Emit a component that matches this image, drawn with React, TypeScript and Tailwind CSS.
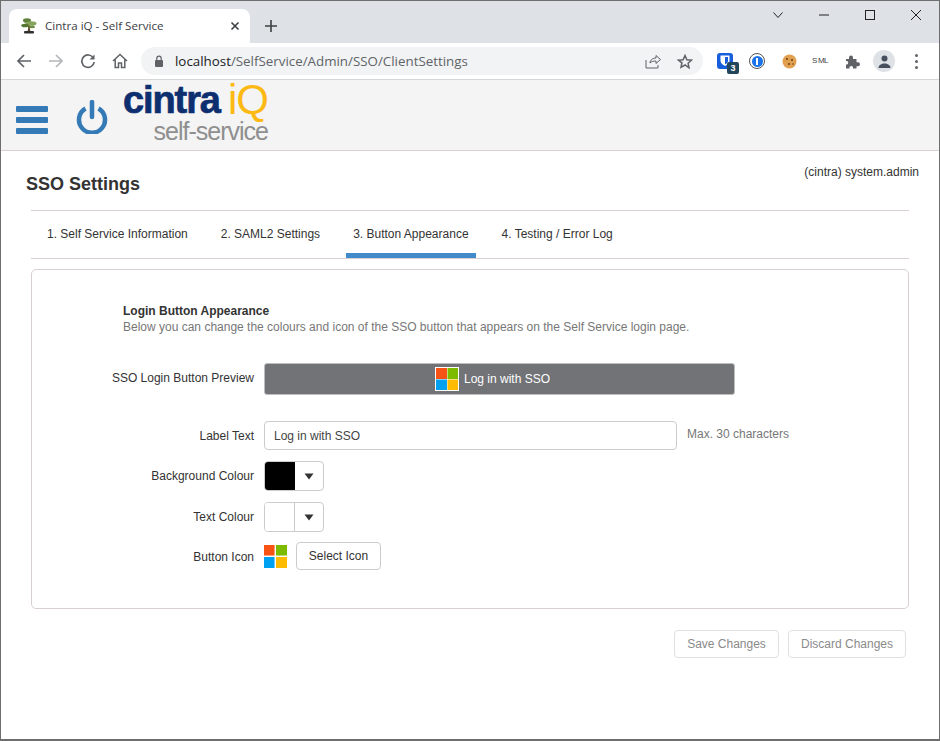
import React from "react";

function MsIcon({ size, border }: { size: number; border?: boolean }) {
  return (
    <svg width={size} height={size} viewBox="0 0 24 24" className="shrink-0">
      {border && <rect width="24" height="24" fill="#fff" />}
      <rect x={border ? 1 : 0} y={border ? 1 : 0} width="11" height="11" fill="#f65314" />
      <rect x="12.5" y={border ? 1 : 0} width={border ? 10.5 : 11.5} height="11" fill="#7cbb00" />
      <rect x={border ? 1 : 0} y="12.5" width="11" height={border ? 10.5 : 11.5} fill="#00a1f1" />
      <rect x="12.5" y="12.5" width={border ? 10.5 : 11.5} height={border ? 10.5 : 11.5} fill="#ffbb00" />
    </svg>
  );
}

function Swatch({ black }: { black?: boolean }) {
  return (
    <div className="flex h-[30px] w-[60px] overflow-hidden rounded-[4px] border border-[#cccccc] bg-white">
      <div className={black ? "w-[30px] bg-black" : "w-[30px] border-r border-[#cccccc] bg-white"} />
      <div className="flex flex-1 items-center justify-center">
        <svg width="10" height="7" viewBox="0 0 10 7"><path d="M0.5 0.5h9L5 6.5z" fill="#333" /></svg>
      </div>
    </div>
  );
}

function Row({ label, className, labelClass, children }: { label: string; className: string; labelClass?: string; children: React.ReactNode }) {
  return (
    <div className={`flex items-center ${className}`}>
      <div className={`w-[222px] shrink-0 text-right text-[12px] text-[#333] ${labelClass ?? ""}`}>{label}</div>
      <div className="ml-[10px] flex min-w-0 flex-1 items-center">{children}</div>
    </div>
  );
}

function Tab({ label, active }: { label: string; active?: boolean }) {
  return (
    <div className={`flex h-[47px] items-center border-b-[5px] px-[7px] pt-[4px] text-[12px] text-[#333] ${active ? "border-[#428bca]" : "border-transparent"}`}>
      {label}
    </div>
  );
}

export default function App() {
  return (
    <div className="flex h-[741px] w-[940px] flex-col overflow-hidden border border-b-2 border-[#6e6e6e] bg-white font-['Liberation_Sans',Arial,sans-serif]">
      {/* Tab strip */}
      <div className="relative flex h-[42px] shrink-0 items-end bg-[#dee1e6] pl-[8px]">
        <div className="flex h-[34px] w-[241px] items-center rounded-t-[8px] bg-white pl-[12px] pr-[10px] font-['Open_Sans',sans-serif] text-[11.6px] text-[#3c4043]">
          <svg width="16" height="18" viewBox="0 0 16 18" className="mr-[8px] shrink-0">
            <path d="M7 8c0 2 .5 4-.5 6h3C8.500 12 9 10 9 8z" fill="#5a4a2a" />
            <ellipse cx="6" cy="3.500" rx="4" ry="2.300" fill="#5f7f3a" />
            <ellipse cx="10" cy="6.500" rx="5.500" ry="2.300" fill="#86a35c" />
            <ellipse cx="4" cy="8.500" rx="3.800" ry="1.800" fill="#53752f" />
            <ellipse cx="11" cy="10" rx="3" ry="1.300" fill="#6d8d45" />
            <rect x="3" y="14" width="10" height="2.500" rx="1" fill="#2f2f2f" />
          </svg>
          <span className="flex-1 whitespace-nowrap">Cintra iQ - Self Service</span>
          <svg width="10" height="10" viewBox="0 0 10 10" className="shrink-0"><path d="M1.500 1.500l7 7M8.500 1.500l-7 7" stroke="#3c4043" strokeWidth="1.600" /></svg>
        </div>
        <svg width="14" height="14" viewBox="0 0 14 14" className="mb-[10px] ml-[14px]"><path d="M7 1v12M1 7h12" stroke="#3c4043" strokeWidth="1.600" /></svg>
        <div className="absolute right-[18px] top-[9px] flex items-center gap-[36px]">
          <svg width="10" height="6" viewBox="0 0 10 6"><path d="M0.500 0.500L5 5.500L9.500 0.500" stroke="#222" fill="none" /></svg>
          <svg width="10" height="10" viewBox="0 0 10 10"><path d="M0 5h10" stroke="#222" /></svg>
          <svg width="10" height="10" viewBox="0 0 10 10"><rect x="0.500" y="0.500" width="9" height="9" stroke="#222" fill="none" /></svg>
          <svg width="10" height="10" viewBox="0 0 10 10"><path d="M0 0l10 10M10 0L0 10" stroke="#222" /></svg>
        </div>
      </div>

      {/* Toolbar */}
      <div className="flex h-[37px] shrink-0 items-center border-b border-[#d6d6d6] bg-white">
        <svg width="16" height="16" viewBox="0 0 16 16" className="ml-[15px]"><path d="M15 8H2M8 2L2 8l6 6" stroke="#5f6368" strokeWidth="1.700" fill="none" /></svg>
        <svg width="16" height="16" viewBox="0 0 16 16" className="ml-[16px]"><path d="M1 8h13M8 2l6 6-6 6" stroke="#b4b6b9" strokeWidth="1.700" fill="none" /></svg>
        <svg width="16" height="16" viewBox="0 0 16 16" className="ml-[16px]"><path d="M13.500 5.200A6.200 6.200 0 1 0 14.200 9" stroke="#5f6368" strokeWidth="1.700" fill="none" /><path d="M14.500 1.500v5h-5z" fill="#5f6368" /></svg>
        <svg width="16" height="16" viewBox="0 0 16 16" className="ml-[16px]"><path d="M1 8l7-6.500L15 8M3.200 6.500V14.500h3.300V10h3v4.500h3.300V6.500" stroke="#5f6368" strokeWidth="1.500" fill="none" /></svg>
        <div className="ml-[13px] flex h-[28px] w-[562px] shrink-0 items-center rounded-full bg-[#f1f3f4] pl-[13px] font-['Open_Sans',sans-serif] text-[13.35px]">
          <svg width="10" height="12" viewBox="0 0 10 12" className="mr-[11px] shrink-0"><rect x="1" y="5" width="8" height="7" rx="1" fill="#5f6368" /><path d="M2.800 5V3.400a2.200 2.200 0 0 1 4.400 0V5" stroke="#5f6368" strokeWidth="1.200" fill="none" /></svg>
          <span className="text-[#202124]">localhost</span>
          <span className="text-[#5f6368]">/SelfService/Admin/SSO/ClientSettings</span>
          <svg width="16" height="15" viewBox="0 0 16 15" className="ml-auto"><path d="M1 6v8h12v-3M5 9c0-3 3-5 6-5V1.500L15.500 5.500 11 9.500V7C8.500 7 6.500 7.500 5 9z" stroke="#5f6368" strokeWidth="1" fill="none" /></svg>
          <svg width="16" height="15" viewBox="0 0 16 15" className="ml-[16px] mr-[10px]"><path d="M8 1.500l1.900 4.200 4.600.5-3.400 3.100.9 4.500L8 11l-4 2.300.9-4.500L1.500 6.200l4.600-.5z" stroke="#5f6368" strokeWidth="1.500" fill="none" /></svg>
        </div>
        <div className="relative ml-[14px] h-[16px] w-[16px] shrink-0 rounded-[3px] bg-[#175ddc]">
          <svg width="16" height="16" viewBox="0 0 16 16"><path d="M3.500 2.500h9v5.500c0 2-2.500 4-4.500 5C6 12 3.500 10 3.500 8z" fill="#fff" /><path d="M8 4h3v4c0 1.500-1.500 2.500-3 3.300z" fill="#175ddc" /></svg>
          <div className="absolute left-[10px] top-[9px] flex h-[12px] w-[12px] items-center justify-center rounded-[2px] bg-[#24465c] text-[9px] font-bold leading-none text-white">3</div>
        </div>
        <div className="ml-[16px] flex h-[16px] w-[16px] shrink-0 items-center justify-center rounded-full border-[1.5px] border-[#555] bg-white">
          <div className="flex h-[11px] w-[11px] items-center justify-center rounded-full bg-[#1a73e8]">
            <div className="h-[7px] w-[2px] bg-white" />
          </div>
        </div>
        <svg width="15" height="15" viewBox="0 0 15 15" className="ml-[17px] shrink-0"><circle cx="7.500" cy="7.500" r="7" fill="#e0a050" /><circle cx="5" cy="5" r="1" fill="#6b3c12" /><circle cx="10" cy="6" r="1" fill="#6b3c12" /><circle cx="7" cy="10" r="1" fill="#6b3c12" /><circle cx="11" cy="10" r="0.800" fill="#6b3c12" /></svg>
        <div className="ml-[15px] flex w-[16px] shrink-0 items-center justify-center text-[8px] leading-none tracking-[-0.5px] text-[#444]">
          <span>S</span>
          <span className="mx-[0.5px] h-[4px] w-[4px] rounded-[1px] bg-[#222]" />
          <span>ML</span>
        </div>
        <svg width="15" height="15" viewBox="0 0 15 15" className="ml-[17px] shrink-0"><path d="M1 5h3V3.500a2 2 0 0 1 4 0V5h3.500v3.200H13a2 2 0 0 1 0 4h-1.500V14.500H8v-1.500a2 2 0 0 0-3.500 0v1.500H1V10.500h1.200a2 2 0 0 0 0-3.500H1z" fill="#5f6368" /></svg>
        <div className="ml-[13px] flex h-[22px] w-[22px] shrink-0 items-center justify-center rounded-full bg-[#dee1e6]">
          <svg width="13" height="13" viewBox="0 0 13 13"><circle cx="6.500" cy="3.500" r="3" fill="#474f5f" /><path d="M0.500 13c0-3 3-4.500 6-4.500s6 1.500 6 4.500z" fill="#474f5f" /></svg>
        </div>
        <div className="ml-[20px] flex shrink-0 flex-col gap-[3px]">
          <div className="h-[3px] w-[3px] rounded-full bg-[#5f6368]" />
          <div className="h-[3px] w-[3px] rounded-full bg-[#5f6368]" />
          <div className="h-[3px] w-[3px] rounded-full bg-[#5f6368]" />
        </div>
      </div>

      {/* App header */}
      <div className="flex h-[71px] shrink-0 items-start border-b border-[#d9cfd3] bg-[#f4f4f4]">
        <div className="ml-[15px] mt-[26px] flex w-[32px] flex-col gap-[5px]">
          <div className="h-[6px] rounded-[1px] bg-[#337ab7]" />
          <div className="h-[6px] rounded-[1px] bg-[#337ab7]" />
          <div className="h-[6px] rounded-[1px] bg-[#337ab7]" />
        </div>
        <svg width="32" height="34" viewBox="0 0 32 34" className="ml-[28px] mt-[20px]">
          <path d="M9.500 8.500a13 13 0 1 0 13 0" stroke="#337ab7" strokeWidth="4.500" fill="none" />
          <path d="M16 2v15" stroke="#337ab7" strokeWidth="4.500" strokeLinecap="round" />
        </svg>
        <div className="ml-[15px] mt-[1px] w-[145px] leading-none">
          <div className="flex h-[38px] items-center whitespace-nowrap text-[38px] leading-none">
            <span className="font-bold tracking-[-1.1px] text-[#0e2f6f] [-webkit-text-stroke:0.7px_#0e2f6f]">cintra</span>
            <span className="ml-[8px] text-[42px] font-normal tracking-[-1px] text-[#fdb913]">iQ</span>
          </div>
          <div className="mt-[-1px] text-right text-[25px] leading-[26px] tracking-[-1px] text-[#8f8f8f]">self-service</div>
        </div>
      </div>

      {/* Content */}
      <div className="relative flex-1 pl-[30px] pr-[30px]">
        <div className="absolute right-[20px] top-[12px] text-[12px] text-[#333]">(cintra) system.admin</div>
        <h1 className="-ml-[5px] mt-[23px] h-[36px] text-[18px] font-bold leading-[21px] text-[#333]">SSO Settings</h1>
        <div className="flex h-[49px] gap-[19px] border-y border-[#d9cfd3] pl-[9px]">
          <Tab label="1. Self Service Information" />
          <Tab label="2. SAML2 Settings" />
          <Tab label="3. Button Appearance" active />
          <Tab label="4. Testing / Error Log" />
        </div>

        <div className="mt-[10px] h-[340px] rounded-[5px] border border-[#d9cfd3] pt-[34px]">
          <div className="ml-[91px] text-[12px] font-bold leading-[15px] text-[#333]">Login Button Appearance</div>
          <div className="ml-[91px] mt-[1px] text-[12px] leading-[15px] text-[#777]">Below you can change the colours and icon of the SSO button that appears on the Self Service login page.</div>

          <Row label="SSO Login Button Preview" className="mt-[28px] h-[32px]" labelClass="pb-[2px]">
            <div className="flex h-[32px] w-[471px] items-center justify-center rounded-[3px] border border-[#bdbdbd] bg-[#727376] pr-[14px] text-[12px] text-white">
              <MsIcon size={24} border />
              <span className="ml-[5px]">Log in with SSO</span>
            </div>
          </Row>

          <Row label="Label Text" className="mt-[26px] h-[29px]">
            <div className="flex h-[29px] w-[413px] shrink-0 items-center rounded-[4px] border border-[#cccccc] bg-white pl-[9px] text-[12px] text-[#444]">Log in with SSO</div>
            <span className="mb-[4px] ml-[10px] text-[12px] text-[#777]">Max. 30 characters</span>
          </Row>

          <Row label="Background Colour" className="mt-[11px] h-[30px]">
            <Swatch black />
          </Row>

          <Row label="Text Colour" className="mt-[11px] h-[30px]">
            <Swatch />
          </Row>

          <Row label="Button Icon" className="mt-[10px] h-[28px]" labelClass="pt-[2px]">
            <MsIcon size={23} />
            <div className="ml-[9px] flex h-[28px] w-[85px] items-center justify-center rounded-[4px] border border-[#cccccc] bg-white text-[12px] text-[#333]">Select Icon</div>
          </Row>
        </div>

        <div className="mr-[3px] mt-[21px] flex justify-end gap-[9px]">
          <div className="flex h-[28px] w-[105px] items-center justify-center rounded-[4px] border border-[#e0e0e0] bg-white text-[12px] text-[#8a8a8a]">Save Changes</div>
          <div className="flex h-[28px] w-[118px] items-center justify-center rounded-[4px] border border-[#e0e0e0] bg-white text-[12px] text-[#8a8a8a]">Discard Changes</div>
        </div>
      </div>
    </div>
  );
}
